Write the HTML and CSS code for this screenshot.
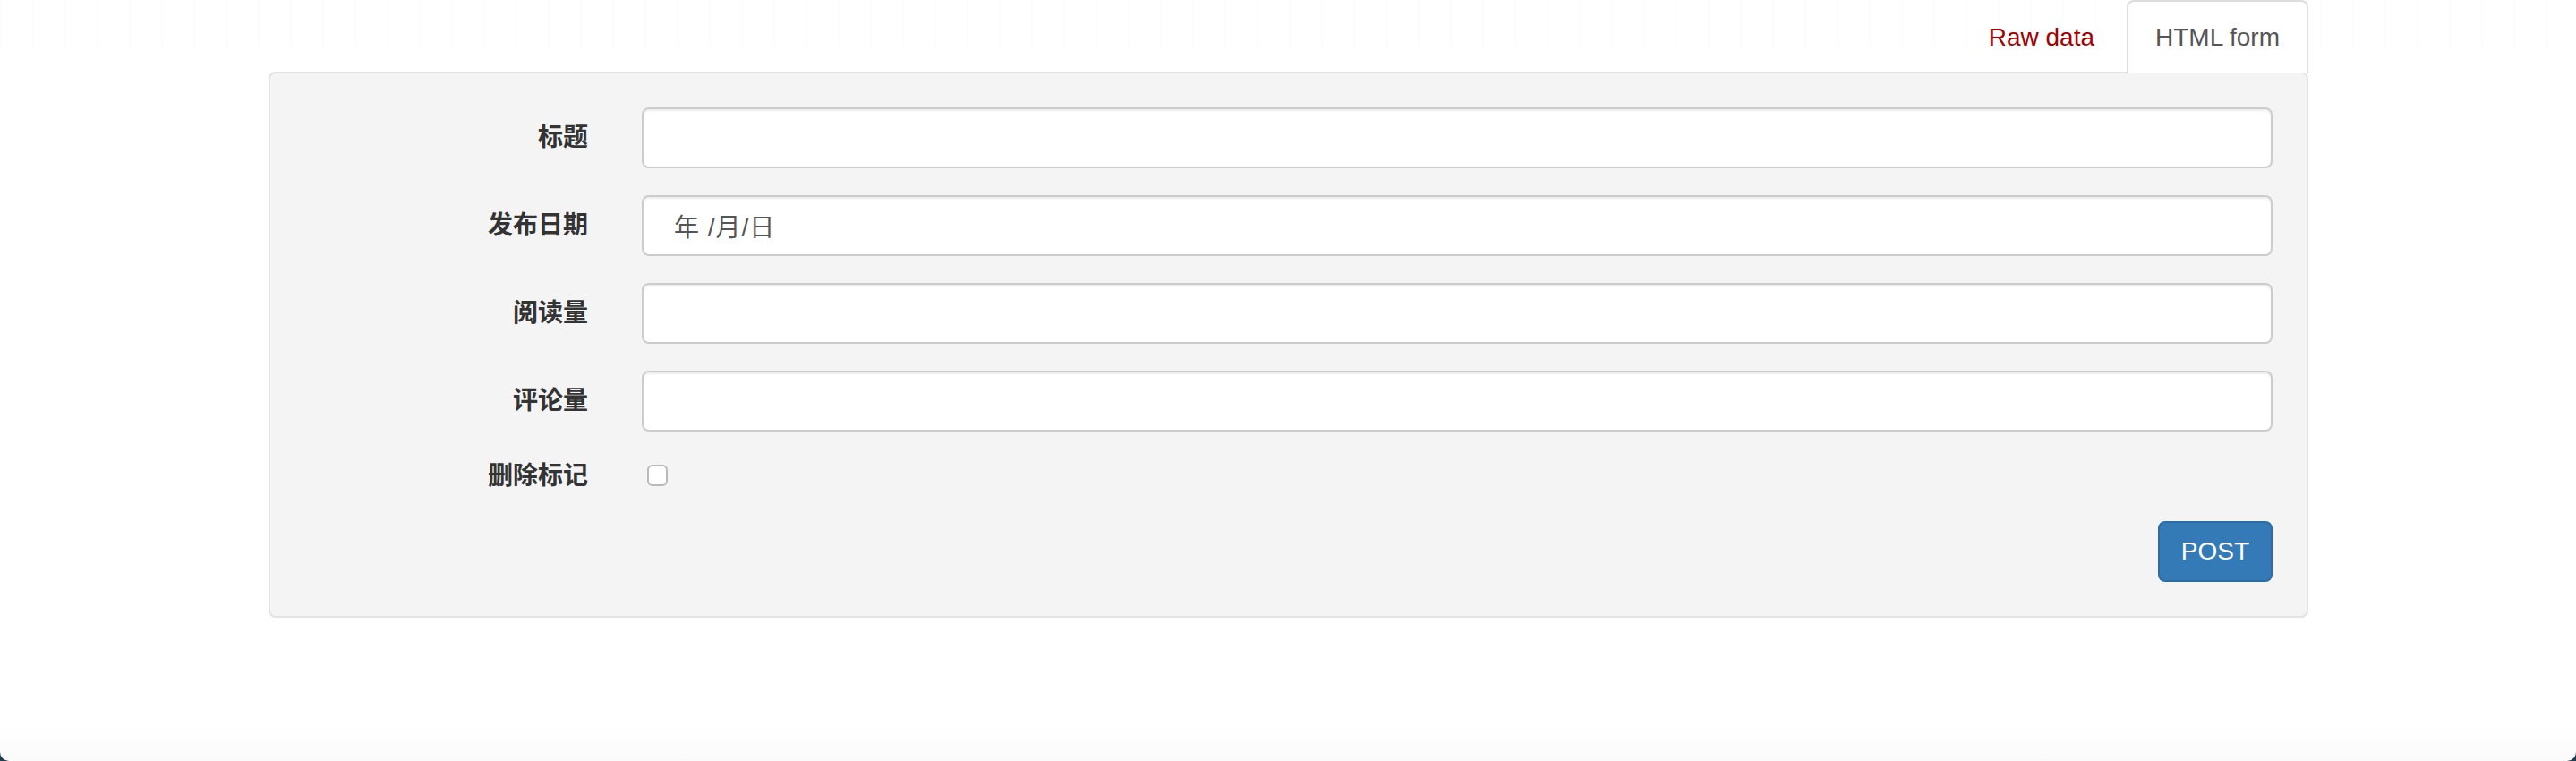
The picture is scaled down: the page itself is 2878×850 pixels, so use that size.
FILE: index.html
```
<!DOCTYPE html>
<html lang="zh-CN">
<head>
<meta charset="utf-8">
<title>HTML form</title>
<link rel="stylesheet" href="styles.css">
</head>
<body>
<div class="page">
  <div class="content">
    <ul class="tabs">
      <li class="tab"><a class="tab-link raw">Raw data</a></li>
      <li class="tab active"><a class="tab-link">HTML form</a></li>
    </ul>
    <div class="well">
      <form class="form">
        <div class="form-group">
          <label class="control-label">标题</label>
          <div class="control"><div class="input"></div></div>
        </div>
        <div class="form-group">
          <label class="control-label">发布日期</label>
          <div class="control"><div class="input date"><span>年 /月/日</span></div></div>
        </div>
        <div class="form-group">
          <label class="control-label">阅读量</label>
          <div class="control"><div class="input"></div></div>
        </div>
        <div class="form-group">
          <label class="control-label">评论量</label>
          <div class="control"><div class="input"></div></div>
        </div>
        <div class="form-group check-group">
          <label class="control-label">删除标记</label>
          <div class="control"><span class="checkbox"></span></div>
        </div>
        <div class="form-actions">
          <button type="button" class="btn">POST</button>
        </div>
      </form>
    </div>
  </div>
</div>
</body>
</html>
```
FILE: styles.css
```
html {
  height: 850px;
  overflow: hidden;
  background: #1f3d4d;
}
body {
  margin: 0;
  font-family: "Liberation Sans", "Noto Sans CJK SC", sans-serif;
  font-size: 28px;
  color: #333;
}
.page {
  height: 850px;
  border-radius: 0 0 10px 10px;
  background:
    repeating-linear-gradient(90deg, rgba(0,0,0,0.012) 0 2px, transparent 2px 36px) left top / 100% 52px no-repeat,
    linear-gradient(180deg, #ffffff 0, #ffffff 810px, #fbfbfb 850px);
}
.content {
  width: 2279px;
  margin: 0 auto 0 300px;
}
.tabs {
  list-style: none;
  margin: 0;
  padding: 0;
  height: 80px;
  display: flex;
  justify-content: flex-end;
  align-items: flex-start;
}
.tab {
  position: relative;
  z-index: 1;
  margin-left: 4px;
}
.tab-link {
  display: block;
  height: 82px;
  box-sizing: border-box;
  padding: 20px 30px;
  line-height: 40px;
  border: 2px solid transparent;
  border-bottom: none;
  border-radius: 8px 8px 0 0;
  color: #555;
  cursor: pointer;
}
.tab-link.raw {
  color: #a30000;
}
.tab.active .tab-link {
  background: #fff;
  border-color: #dddddd;
}
.well {
  background: #f4f4f4;
  border: 2px solid #e3e3e3;
  border-radius: 8px;
  padding: 38px;
  height: 530px;
}
.form-group {
  display: flex;
  align-items: center;
  gap: 60px;
  margin-bottom: 30px;
}
.control-label {
  width: 317px;
  flex: none;
  text-align: right;
  font-weight: bold;
  line-height: 40px;
}
.control {
  flex: 1;
  display: flex;
  align-items: center;
}
.input {
  flex: 1;
  height: 68px;
  box-sizing: border-box;
  border: 2px solid #cccccc;
  border-radius: 8px;
  background: #fff;
  box-shadow: inset 0 2px 2px rgba(0,0,0,0.075);
  display: flex;
  align-items: center;
  padding: 0 24px;
}
.input.date {
  padding-left: 34px;
  color: #555;
  letter-spacing: 1px;
}
.check-group {
  height: 40px;
}
.checkbox {
  display: block;
  width: 23px;
  height: 24px;
  box-sizing: border-box;
  margin-left: 6px;
  margin-top: -3px;
  border: 2px solid #b9b9b9;
  border-radius: 6px;
  background: #fff;
}
.form-actions {
  display: flex;
  justify-content: flex-end;
}
.btn {
  height: 68px;
  box-sizing: border-box;
  padding: 0 24px;
  font-family: "Liberation Sans", sans-serif;
  font-size: 28px;
  color: #fff;
  background: #337ab7;
  border: 2px solid #2e6da4;
  border-radius: 8px;
  cursor: pointer;
}
```
